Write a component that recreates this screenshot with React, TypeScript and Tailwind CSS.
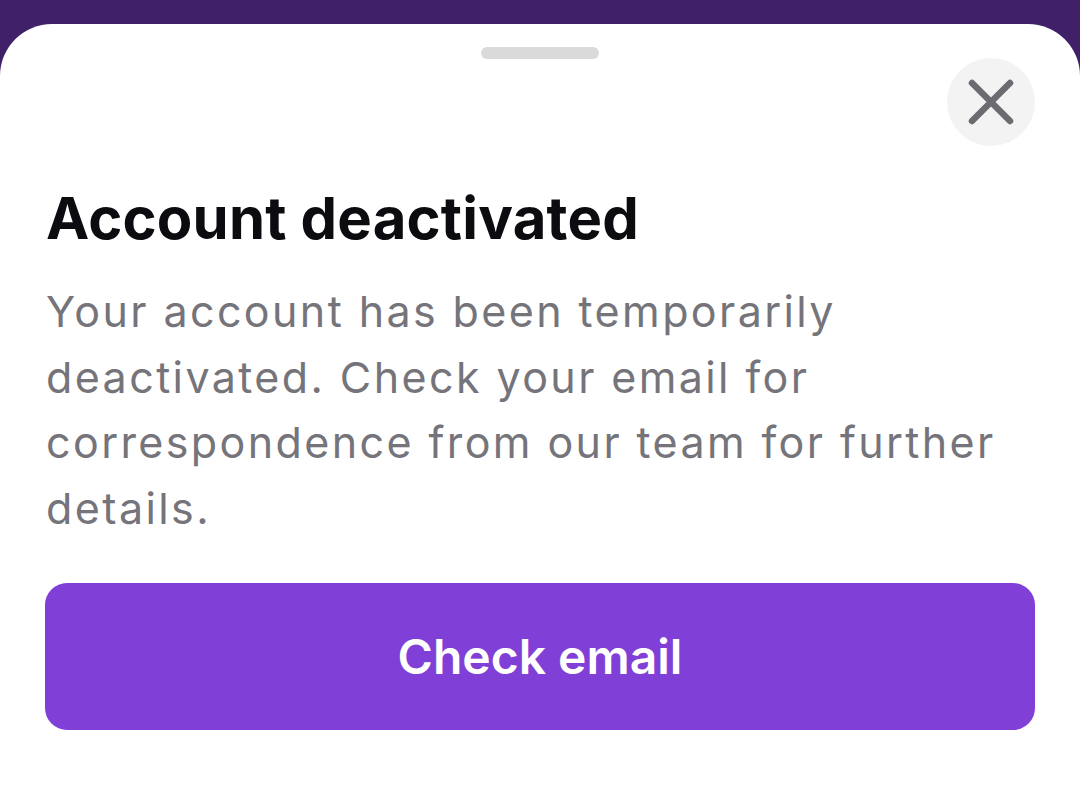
import React from "react";

export default function App() {
  return (
    <div className="w-[1080px] h-[809px] bg-[#41206a] overflow-hidden" style={{ fontFamily: "Inter, 'Noto Sans', sans-serif" }}>
      <div className="mt-[24px] h-[785px] bg-white rounded-t-[52px] flex flex-col">
        <div className="flex justify-center pt-[23px]">
          <div className="w-[118px] h-[12px] rounded-full bg-[#dadada]" />
        </div>
        <div className="flex justify-end pr-[45px] -mt-[1px]">
          <button className="w-[88px] h-[88px] rounded-full bg-[#f3f3f3] flex items-center justify-center">
            <svg width="46" height="46" viewBox="0 0 46 46" fill="none" stroke="#6c6b71" strokeWidth="6.5" strokeLinecap="round">
              <path d="M4 4L42 42M42 4L4 42" />
            </svg>
          </button>
        </div>
        <div className="px-[46px]">
          <h1 className="mt-[36px] text-[58px] leading-[72px] font-bold text-[#0b0b10] tracking-[0.2px]">Account deactivated</h1>
          <p className="mt-[25px] text-[43px] leading-[65.5px] text-[#75747a] tracking-[2.4px]">
            Your account has been temporarily deactivated. Check your email for correspondence from our team for further details.
          </p>
        </div>
        <div className="px-[45px] mt-[42px]">
          <button className="w-full h-[147px] rounded-[22px] bg-[#803fd6] text-white text-[48px] font-semibold">Check email</button>
        </div>
      </div>
    </div>
  );
}
